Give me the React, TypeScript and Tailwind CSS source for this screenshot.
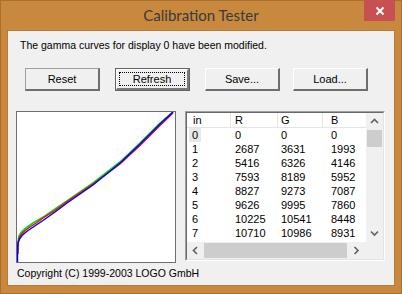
import React from "react";

const rows: [string, string, string, string][] = [
  ["0", "0", "0", "0"],
  ["1", "2687", "3631", "1993"],
  ["2", "5416", "6326", "4146"],
  ["3", "7593", "8189", "5952"],
  ["4", "8827", "9273", "7087"],
  ["5", "9626", "9995", "7860"],
  ["6", "10225", "10541", "8448"],
  ["7", "10710", "10986", "8931"],
];

const blue =
  "0.5,150 0.5,136 1,131 2.5,127 5,123.5 9,120 14,116.5 20,112.5 26,108.5 38,100 50,91 76,73 103,51 123,32 143,12 156,0";
const green =
  "1.3,138 1.3,128 2,124 4,120.5 7,117.5 11,114.5 16,111 22,107.5 28,104 38,97 50,89 76,71 103,50 123,31 143,11 156,0";
const red =
  "1,142 1,131 2,126.5 4.5,122 8,118.5 13,115 20,110.5 26,106 38,98.5 50,89.5 76,72 103,52 123,33.5 143,13.5 156,1";

function Btn({ label, def, hot }: { label: string; def?: boolean; hot?: boolean }) {
  if (def) {
    return (
      <div className="w-[75px] h-[23px] border border-[#646464] bg-[#f0f0f0]">
        <div className="w-full h-full border-t border-l border-t-white border-l-white border-r-2 border-b-2 border-r-[#7a7a7a] border-b-[#7a7a7a] p-[2px]">
          <div className="w-full h-full border border-dotted border-black flex items-center justify-center leading-none">
            {label}
          </div>
        </div>
      </div>
    );
  }
  return (
    <div
      className={
        "w-[75px] h-[23px] bg-[#f0f0f0] border-t border-l border-r-2 border-b-2 border-r-[#6e6e6e] border-b-[#6e6e6e] flex items-center justify-center leading-none " +
        (hot ? "border-t-[#a0a0a0] border-l-[#a0a0a0]" : "border-t-white border-l-white")
      }
    >
      {label}
    </div>
  );
}

function Chevron({ dir }: { dir: "up" | "down" | "left" | "right" }) {
  const pts =
    dir === "up"
      ? "1,5 4.5,1.5 8,5"
      : dir === "down"
      ? "1,1.5 4.5,5 8,1.5"
      : dir === "left"
      ? "5,1 1.5,4.5 5,8"
      : "1.5,1 5,4.5 1.5,8";
  const w = dir === "up" || dir === "down" ? 9 : 7;
  const h = dir === "up" || dir === "down" ? 7 : 9;
  return (
    <svg width={w} height={h} viewBox={`0 0 ${w} ${h}`}>
      <polyline points={pts} fill="none" stroke="#606060" strokeWidth="1.6" />
    </svg>
  );
}

export default function App() {
  const font = { fontFamily: '"Liberation Sans", Arial, sans-serif' };
  return (
    <div
      className="w-[402px] h-[294px] bg-[#c8893e] border border-[#a96f2e] flex flex-col text-[10.5px] text-black"
      style={font}
    >
      <div className="relative h-[29px] flex items-center justify-center">
        <span
          className="text-[15px] text-[#3a3a3a] mt-[-1px]"
          style={{ fontFamily: 'Lato, "Noto Sans", sans-serif' }}
        >
          Calibration Tester
        </span>
        <div className="absolute top-[-1px] right-[6px] w-[31px] h-[21px] bg-[#c75050] flex items-center justify-center">
          <svg width="10" height="10" viewBox="0 0 10 10">
            <path d="M1.5 1.5 L8.5 8.5 M8.5 1.5 L1.5 8.5" stroke="white" strokeWidth="2" />
          </svg>
        </div>
      </div>

      <div className="mx-[6px] w-[388px] h-[256px] border border-[#b47a36] bg-[#f0f0f0] flex flex-col">
        <div className="pl-[12px] pt-[7px] leading-[14px] text-[10.5px]">
          The gamma curves for display 0 have been modified.
        </div>

        <div className="flex pl-[17px] mt-[16px] text-[11px]">
          <Btn label="Reset" hot />
          <div className="ml-[15px]">
            <Btn label="Refresh" def />
          </div>
          <div className="ml-[15px]">
            <Btn label="Save..." />
          </div>
          <div className="ml-[13px]">
            <Btn label="Load..." />
          </div>
        </div>

        <div className="flex pl-[8px] mt-[20px] items-start text-[11px]">
          <div className="w-[160px] h-[152px] border border-[#6e6e6e] bg-white">
            <svg width="158" height="150" viewBox="0 0 158 150" className="block">
              <polyline points={green} fill="none" stroke="#00e000" strokeWidth="1.6" />
              <polyline points={red} fill="none" stroke="#ff0000" strokeWidth="1.4" />
              <polyline points={blue} fill="none" stroke="#0000ff" strokeWidth="1.5" />
            </svg>
          </div>

          <div className="ml-[9px] w-[200px] h-[150px] border border-t-[#a0a0a0] border-l-[#a0a0a0] border-r-white border-b-white">
            <div className="w-full h-full border border-t-[#696969] border-l-[#696969] border-r-[#e3e3e3] border-b-[#e3e3e3] bg-white flex flex-col">
              <div className="flex h-[129px]">
                <div className="w-[179px] flex flex-col">
                  <div className="flex h-[15px] border-b border-[#e5e5e5] leading-[14px]">
                    <div className="w-[44px] pl-[6px] border-r border-[#e5e5e5]">in</div>
                    <div className="w-[47px] pl-[4px] border-r border-[#e5e5e5]">R</div>
                    <div className="w-[45px] pl-[3px] border-r border-[#e5e5e5]">G</div>
                    <div className="flex-1 pl-[8px]">B</div>
                  </div>
                  {rows.map((r, i) => (
                    <div key={i} className="flex h-[14px] leading-[14px]">
                      <div className="w-[44px] pl-[2px]">
                        <span className={"inline-block px-[3px] " + (i === 0 ? "bg-[#e8e8e8]" : "")}>
                          {r[0]}
                        </span>
                      </div>
                      <div className="w-[47px] pl-[4px]">{r[1]}</div>
                      <div className="w-[45px] pl-[3px]">{r[2]}</div>
                      <div className="flex-1 pl-[8px]">{r[3]}</div>
                    </div>
                  ))}
                </div>
                <div className="w-[17px] bg-[#f0f0f0] flex flex-col">
                  <div className="h-[17px] flex items-center justify-center">
                    <Chevron dir="up" />
                  </div>
                  <div className="h-[17px] mx-[1px] bg-[#cdcdcd]" />
                  <div className="flex-1" />
                  <div className="h-[17px] flex items-center justify-center">
                    <Chevron dir="down" />
                  </div>
                </div>
              </div>
              <div className="flex h-[17px] bg-[#f0f0f0]">
                <div className="w-[17px] flex items-center justify-center">
                  <Chevron dir="left" />
                </div>
                <div className="w-[143px] my-[1px] bg-[#cdcdcd]" />
                <div className="flex-1 flex items-center justify-center">
                  <Chevron dir="right" />
                </div>
                <div className="w-[17px] bg-[#f0f0f0]" />
              </div>
            </div>
          </div>
        </div>

        <div className="pl-[9px] mt-[3px] leading-[14px] text-[10.5px]">Copyright (C) 1999-2003 LOGO GmbH</div>
      </div>
    </div>
  );
}
